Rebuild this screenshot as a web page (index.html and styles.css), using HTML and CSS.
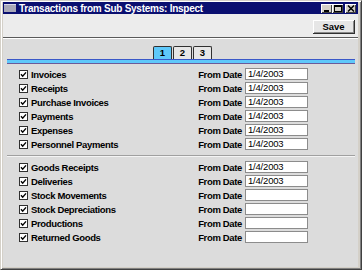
FILE: index.html
```html
<!DOCTYPE html>
<html lang="en">
<head>
    <meta charset="UTF-8">
    <title>Transactions from Sub Systems: Inspect</title>
    <link rel="stylesheet" href="styles.css">
</head>
<body>
    <div class="window">
        <div class="titlebar">
            <span class="app-icon"></span>
            <span class="title">Transactions from Sub Systems: Inspect</span>
            <div class="title-buttons">
                <span class="tbtn">
                    <svg width="8" height="7" viewBox="0 0 8 7"><rect x="1" y="5" width="5" height="2" fill="#000"/></svg>
                </span>
                <span class="tbtn">
                    <svg width="8" height="7" viewBox="0 0 8 7"><rect x="0.5" y="0.5" width="7" height="6" fill="none" stroke="#000"/><rect x="0" y="0" width="8" height="2" fill="#000"/></svg>
                </span>
                <span class="tbtn close">
                    <svg width="8" height="7" viewBox="0 0 8 7"><path d="M1 0.5 L7 6.5 M7 0.5 L1 6.5" stroke="#000" stroke-width="1.5"/></svg>
                </span>
            </div>
        </div>

        <div class="toolbar">
            <button class="save-button">Save</button>
        </div>

        <div class="panel">
            <div class="tabs">
                <span class="tab active">1</span>
                <span class="tab">2</span>
                <span class="tab">3</span>
            </div>
            <div class="tab-line"></div>

            <div class="group" id="group-one"></div>
            <div class="separator"></div>
            <div class="group" id="group-two"></div>
        </div>
    </div>

    <script>
        const groupOne = [
            ['Invoices', '1/4/2003'],
            ['Receipts', '1/4/2003'],
            ['Purchase Invoices', '1/4/2003'],
            ['Payments', '1/4/2003'],
            ['Expenses', '1/4/2003'],
            ['Personnel Payments', '1/4/2003']
        ];
        const groupTwo = [
            ['Goods Receipts', '1/4/2003'],
            ['Deliveries', '1/4/2003'],
            ['Stock Movements', ''],
            ['Stock Depreciations', ''],
            ['Productions', ''],
            ['Returned Goods', '']
        ];

        const checkSvg = '<svg width="9" height="9" viewBox="0 0 9 9"><rect x="0.5" y="0.5" width="8" height="8" fill="#fff" stroke="#303030"/><path d="M2 4.2 L3.7 6.2 L7 2.4" fill="none" stroke="#000" stroke-width="1.4"/></svg>';

        function renderRows(target, rows) {
            target.innerHTML = rows.map(row => `
                <div class="row">
                    <label class="check">${checkSvg}<span>${row[0]}</span></label>
                    <span class="field-label">From Date</span>
                    <span class="field">${row[1]}</span>
                </div>`).join('');
        }

        renderRows(document.getElementById('group-one'), groupOne);
        renderRows(document.getElementById('group-two'), groupTwo);
    </script>
</body>
</html>
```

FILE: styles.css
```css
body {
    margin: 0;
    padding: 0;
    font-family: "Liberation Sans", Arial, sans-serif;
    font-size: 9.5px;
    background-color: #d4d0c8;
}

.window {
    width: 362px;
    height: 270px;
    box-sizing: border-box;
    display: flex;
    flex-direction: column;
    border-top: 1px solid #d4d0c8;
    border-left: 1px solid #d4d0c8;
    border-right: 1px solid #404040;
    border-bottom: 1px solid #404040;
    padding: 1px 3px 2px 2px;
    box-shadow: inset 1px 1px 0 #ffffff, inset -1px -1px 0 #808080;
    background-color: #d4d0c8;
}

/* title bar */
.titlebar {
    height: 12px;
    background-color: #0a0f70;
    display: flex;
    align-items: center;
    padding: 0 2px 0 1px;
}

.app-icon {
    width: 12px;
    height: 7px;
    background-color: #a8a8b8;
    border-top: 1px solid #d8d8e8;
    margin-right: 3px;
}

.title {
    color: white;
    font-size: 10px;
    font-weight: bold;
    letter-spacing: -0.25px;
    flex: 1;
}

.title-buttons {
    display: flex;
}

.tbtn {
    width: 11px;
    height: 9px;
    background-color: #d4d0c8;
    box-shadow: inset 1px 1px 0 #ffffff, inset -1px -1px 0 #404040;
    display: flex;
    align-items: center;
    justify-content: center;
}

.tbtn.close {
    margin-left: 2px;
}

/* toolbar with save */
.toolbar {
    height: 23px;
    background-color: #ececec;
    display: flex;
    justify-content: flex-end;
    align-items: center;
    padding-right: 3px;
    border-bottom: 1px solid #5a5a5a;
}

.save-button {
    width: 42px;
    height: 14px;
    padding: 0;
    font-family: inherit;
    font-size: 9.5px;
    font-weight: bold;
    color: black;
    background-color: #e6e6e6;
    border: none;
    border-right: 1px solid #303030;
    border-bottom: 1px solid #303030;
    box-shadow: inset 1px 1px 0 #ffffff, inset -1px -1px 0 #8a8a8a;
    margin-top: 2px;
}

/* main panel */
.panel {
    flex: 1;
    background-color: #dcdcdc;
    border-top: 1px solid #ffffff;
    padding: 7px 3px 0 4px;
}

.tabs {
    display: flex;
    justify-content: center;
    gap: 1px;
    padding-left: 3px;
}

.tab {
    width: 17px;
    height: 12px;
    line-height: 12px;
    text-align: center;
    font-weight: bold;
    background-color: #e6e6e6;
    border: 1px solid #303030;
    border-bottom: none;
    border-radius: 2px 2px 0 0;
}

.tab.active {
    background-color: #5ec8fa;
}

.tab-line {
    height: 3px;
    background-color: #5ec8fa;
    border-top: 1px solid #3a58c8;
    border-bottom: 1px solid #6a5a9a;
}

.group {
    padding: 3px 0 3px 12px;
}

.row {
    display: grid;
    grid-template-columns: 1fr auto 63px;
    align-items: center;
    height: 14px;
    margin-right: 47px;
}

.check {
    display: flex;
    align-items: center;
    gap: 3px;
    font-weight: bold;
    letter-spacing: -0.35px;
}

.check svg {
    display: block;
}

.field-label {
    font-weight: bold;
    letter-spacing: -0.35px;
    margin-right: 3px;
}

.field {
    height: 12px;
    box-sizing: border-box;
    background-color: white;
    border: 1px solid #8c8c8c;
    line-height: 10px;
    padding-left: 2px;
    letter-spacing: -0.2px;
}

.separator {
    height: 1px;
    background-color: #a0a0a0;
    border-bottom: 1px solid #f4f4f4;
    margin-top: 1px;
}
```
